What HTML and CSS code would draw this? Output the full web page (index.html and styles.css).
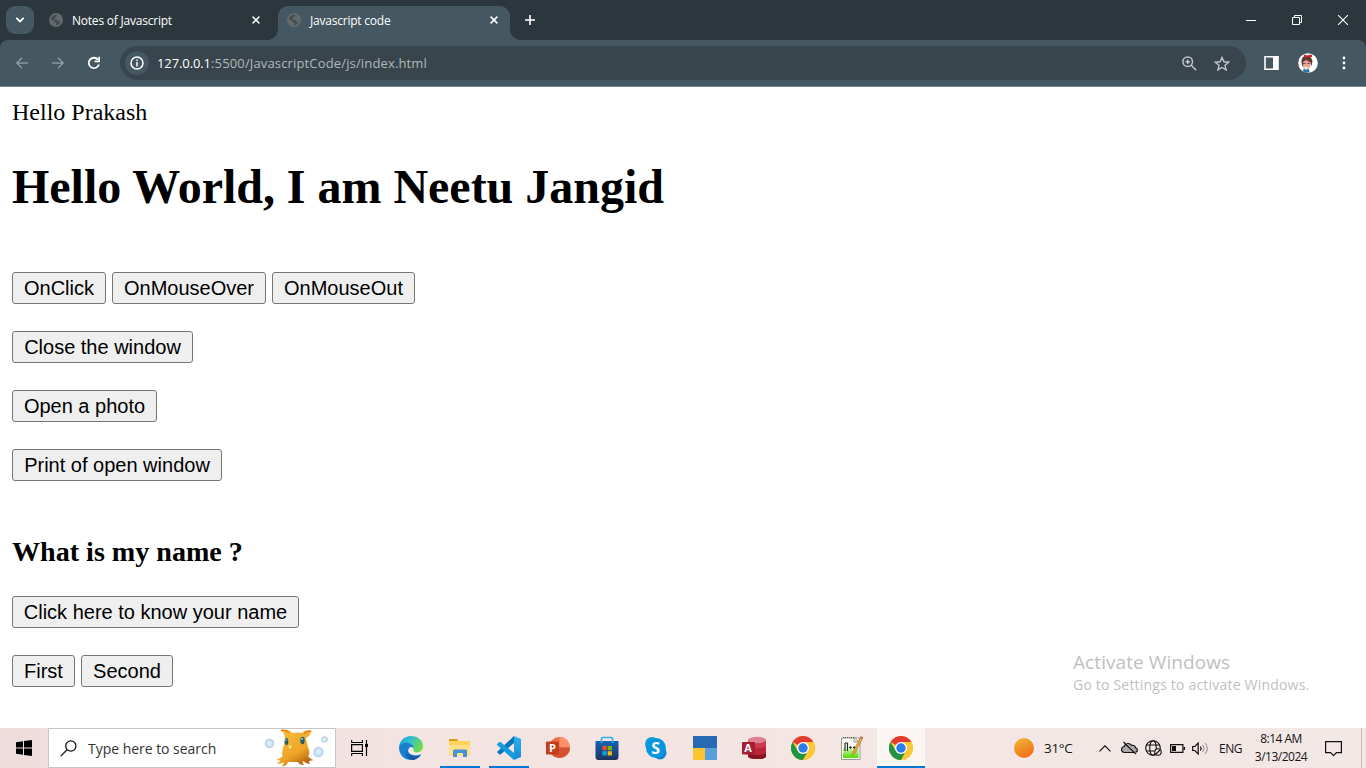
FILE: index.html
```html
<!DOCTYPE html>
<html lang="en">
<head>
<meta charset="utf-8">
<title>Javascript code</title>
<link rel="stylesheet" href="styles.css">
</head>
<body>
<svg class="defs" width="0" height="0">
  <defs>
    <symbol id="globe" viewBox="0 0 14 14"><circle cx="7" cy="7" r="7" fill="#66696b"/><path d="M2 5.200Q3 2.500 6 1.700L8.500 2 7.600 3.800 6 4.300 5.800 5.600 4.800 6.200 7.500 6.400 9 7.700 9.200 8.800 11.800 8.200Q10.800 11.500 7.500 12.200L6.800 11.200 7.600 10 5.800 9.300 5 7.600 2 6.600z" fill="#3f4d54"/></symbol>
    <symbol id="cross" viewBox="0 0 8 8"><path d="M.6.6l6.800 6.800M7.400.6L.6 7.400" stroke="#fff" stroke-width="1.500"/></symbol>
    <symbol id="chrome" viewBox="0 0 24 24"><circle cx="12" cy="12" r="12" fill="#ffcd40"/><path d="M12 12L1.600 6A12 12 0 0 1 22.400 6H12z" fill="#e33b2e"/><path d="M1.600 6A12 12 0 0 0 12 24l5.200-9L12 12 6.800 15z" fill="#229342"/><path d="M22.400 6A12 12 0 0 1 12 24l5.200-9A6 6 0 0 0 12 6z" fill="#fcc934"/><circle cx="12" cy="12" r="6" fill="#fff"/><circle cx="12" cy="12" r="4.700" fill="#2b7de9"/></symbol>
    <linearGradient id="vs" x2="0" y2="1"><stop stop-color="#2fb1f4"/><stop offset="1" stop-color="#168bd6"/></linearGradient>
    <linearGradient id="edgeA" x1="0" y1="0" x2="1" y2=".4"><stop stop-color="#1b9be0"/><stop offset=".5" stop-color="#33c1d4"/><stop offset="1" stop-color="#6bdc4b"/></linearGradient>
    <linearGradient id="edgeB" x2="0" y2="1"><stop stop-color="#1787d2"/><stop offset="1" stop-color="#0f4f9e"/></linearGradient>
    <linearGradient id="store" x2="0" y2="1"><stop stop-color="#1264b3"/><stop offset="1" stop-color="#20345c"/></linearGradient>
    <linearGradient id="sun" x1=".2" y1="0" x2=".7" y2="1"><stop stop-color="#efb439"/><stop offset="1" stop-color="#f26b18"/></linearGradient>
    <linearGradient id="gold" x2=".6" y2="1"><stop stop-color="#f9bd3a"/><stop offset=".7" stop-color="#eda528"/><stop offset="1" stop-color="#b9650f"/></linearGradient>
    <radialGradient id="bubble"><stop stop-color="#e0f7fb"/><stop offset=".6" stop-color="#c5e5ef"/><stop offset="1" stop-color="#c5c2e8"/></radialGradient>
    <linearGradient id="npp" x2="0" y2="1"><stop offset=".3" stop-color="#f8faf5"/><stop offset=".9" stop-color="#61df12"/></linearGradient>
  </defs>
</svg>

<div class="screen">
  <header class="tabstrip">
    <div class="tab-search"><svg width="10" height="6" viewBox="0 0 10 6"><path d="M1.300.8L5 4.500 8.700.8" fill="none" stroke="#fff" stroke-width="1.800"/></svg></div>
    <div class="tab">
      <svg class="favicon"><use href="#globe"/></svg>
      <span class="tab-title">Notes of Javascript</span>
      <svg class="tab-close"><use href="#cross"/></svg>
    </div>
    <div class="tab tab-active">
      <svg class="favicon"><use href="#globe"/></svg>
      <span class="tab-title">Javascript code</span>
      <svg class="tab-close"><use href="#cross"/></svg>
    </div>
    <svg class="new-tab" width="10" height="10" viewBox="0 0 10 10"><path d="M5 0v10M0 5h10" stroke="#fff" stroke-width="1.600"/></svg>
    <div class="window-controls">
      <svg width="10" height="10" viewBox="0 0 10 10"><path d="M0 5.500h10" stroke="#fff"/></svg>
      <svg width="10" height="10" viewBox="0 0 10 10"><path d="M.5 2.500h7v7h-7zM2.500 2.500v-2h7v7h-2" fill="none" stroke="#fff"/></svg>
      <svg width="10" height="10" viewBox="0 0 10 10"><path d="M0 0l10 10M10 0L0 10" stroke="#fff" stroke-width="1.100"/></svg>
    </div>
  </header>

  <nav class="toolbar-back">
    <div class="toolbar">
      <div class="nav-buttons">
        <svg width="12" height="12" viewBox="0 0 12 12"><path d="M12 6H1M6 .8L.9 6 6 11.200" fill="none" stroke="#8b979c" stroke-width="1.500"/></svg>
        <svg width="12" height="12" viewBox="0 0 12 12"><path d="M0 6h11M6 .8L11.100 6 6 11.200" fill="none" stroke="#8b979c" stroke-width="1.500"/></svg>
        <svg width="14" height="14" viewBox="0 0 14 14"><path d="M11.900 8.500A5.200 5.200 0 1 1 11 3.700" fill="none" stroke="#fff" stroke-width="1.800"/><path d="M13 .8v5.400H7.500V4.600h3.800V.8z" fill="#fff"/></svg>
      </div>
      <div class="omnibox">
        <div class="site-info"><svg width="14" height="14" viewBox="0 0 14 14"><circle cx="7" cy="7" r="6" fill="none" stroke="#fff" stroke-width="1.500"/><path d="M7 6v4.500M7 3.500v1.500" stroke="#fff" stroke-width="1.500"/></svg></div>
        <div class="url"><span class="host">127.0.0.1</span><span class="path">:5500/JavascriptCode/js/index.html</span></div>
        <svg class="zoom-icon" width="15" height="15" viewBox="0 0 15 15" fill="none" stroke="#c0c5c7" stroke-width="1.500"><circle cx="5.700" cy="5.700" r="4.800"/><path d="M9.200 9.200l5 5M5.700 3.500v4.400M3.500 5.700h4.400"/></svg>
        <svg class="star" width="16" height="15" viewBox="0 0 16 15"><path d="M8 1.500l1.900 4.300 4.700.4L11 9.300l1.100 4.600L8 11.500l-4.100 2.400L5 9.300 1.400 6.200l4.700-.4z" fill="none" stroke="#c0c5c7" stroke-width="1.400"/></svg>
      </div>
      <svg class="panel-icon" width="15" height="14" viewBox="0 0 15 14"><path d="M1 .8h13v12.400H1z" fill="none" stroke="#fff" stroke-width="1.600"/><path d="M9 1h5v12H9z" fill="#fff"/></svg>
      <svg class="avatar" width="20" height="20" viewBox="0 0 20 20"><circle cx="10" cy="10" r="9.800" fill="#fff"/><path d="M3.500 9.500Q3 4 7 3q6-1 7.500 5l-1 5-2-4-5 1-2 4z" fill="#65392f"/><path d="M6 1.500L9 2.500l5-1V4L10 4 6 4.500z" fill="#cd2331"/><path d="M5 9l3-2 5 3-.5 3.500-3.500 1-3.500-1.500z" fill="#dfa999"/><path d="M5 10.500h2.600M9.300 10.500h2.600" stroke="#8b4260"/><path d="M5 18.500l.5-2.500 3 .5 2.500-.5.5 3-3 .8z" fill="#2675ac"/><path d="M5 13l2 3M12 13l-2.500 3" stroke="#e8b298" stroke-width="1.500"/></svg>
      <svg class="kebab" width="4" height="14" viewBox="0 0 4 14" fill="#fff"><circle cx="2" cy="2" r="1.400"/><circle cx="2" cy="7" r="1.400"/><circle cx="2" cy="12" r="1.400"/></svg>
    </div>
  </nav>

  <main class="page">
    <div class="document">
      <p class="greeting">Hello Prakash</p>
      <h1 class="headline">Hello World, I am Neetu Jangid</h1>
      <div class="button-row"><button class="w-click">OnClick</button><button class="w-over">OnMouseOver</button><button class="w-out">OnMouseOut</button></div>
      <div class="button-row"><button class="w-close">Close the window</button></div>
      <div class="button-row"><button class="w-open">Open a photo</button></div>
      <div class="button-row"><button class="w-print">Print of open window</button></div>
      <h3 class="question">What is my name ?</h3>
      <div class="button-row"><button class="w-name">Click here to know your name</button></div>
      <div class="button-row"><button class="w-first">First</button><button class="w-second">Second</button></div>
    </div>
    <aside class="watermark">
      <span class="watermark-title">Activate Windows</span>
      <span class="watermark-sub">Go to Settings to activate Windows.</span>
    </aside>
  </main>

  <footer class="taskbar">
    <div class="start"><svg width="16" height="16" viewBox="0 0 16 16"><path d="M0 2.200L7 1.200V7.500H0zM8 1.100L16 0v7.500H8zM0 8.500h7v6.300L0 13.800zM8 8.500h8V16l-8-1.100z"/></svg></div>
    <div class="searchbox">
      <svg width="17" height="17" viewBox="0 0 17 17"><circle cx="10.800" cy="6" r="5.100" fill="none" stroke="#111" stroke-width="1.300"/><path d="M7.100 9.700L.7 16.100" stroke="#111" stroke-width="1.300"/></svg>
      <span class="search-text">Type here to search</span>
      <svg class="mascot" width="66" height="38" viewBox="0 0 66 38">
        <circle cx="5.500" cy="14.500" r="4.800" fill="url(#bubble)"/><circle cx="60.500" cy="10.500" r="3.300" fill="url(#bubble)"/><circle cx="54.500" cy="23" r="5.200" fill="url(#bubble)"/>
        <path d="M21 8Q20 3 16 1q9-2 12 3 6-1 10 0 3-4 10-2-3 2-2 4l-4 3q1 7 3 12 1 4-1 6 3 4 6 4l-5 1q0 1 1 3-5-1-7-3-1 2 1 4-5 0-6-3H24q-1 4-6 4.500 2-2 1.500-4-5 2-7 1 3-1 4-3-2 0-4-1 4-1 6-3-1-6 1-10 1-5 1.500-9.500z" fill="url(#gold)"/>
        <path d="M26 27q5 2 10 0" stroke="#e39a24" stroke-width="1" fill="none"/>
        <path d="M17 1.200q6 0 8 3M47 2.500q-5-1-7 2" stroke="#f3791b" stroke-width="1.300" fill="none"/>
        <ellipse cx="22.500" cy="12.500" rx="1.800" ry="3.600" fill="#285e69"/><ellipse cx="38.500" cy="11.500" rx="2.200" ry="3.700" fill="#285e69"/><circle cx="22" cy="11" r=".8" fill="#9de4e2"/><circle cx="38" cy="10" r=".9" fill="#9de4e2"/>
        <path d="M23.500 16.500q3-2 5 0l-1.500 4h-2z" fill="#f7df69" stroke="#c58d18" stroke-width=".5"/>
      </svg>
    </div>
    <div class="task-view"><svg width="17" height="16" viewBox="0 0 17 16" fill="none" stroke="#000" stroke-width="1.200"><path d="M.6 0v2.500h10.800V0M.6 4.600h10.800v6.800H.6zM.6 16v-2.500h10.800V16M15.500 0v16"/><path d="M14 4h3v3h-3z" fill="#000" stroke="none"/></svg></div>
    <div class="apps">
      <div class="app"><svg viewBox="0 0 24 24"><path d="M0 11C.5 5 5 0 12 0c7.500 0 12 5 12 10 0 4.500-3.500 6.500-7 6.500-3 0-4-1.200-3-2.500 1.500-3-1-6.500-6-6.500C4 7.500 1 9 0 11z" fill="url(#edgeA)"/><path d="M0 11.500C.5 8.500 4 6.500 8 6.800c4.500.2 7 3.200 6.500 6C14 10.500 9 11 9 15c0 5 7 7 12.500 4.500Q18 24 12 24C5 24 0 18.500 0 11.500z" fill="#1a7fce"/><path d="M9.500 12Q5 13 6 17.500C7 21 10 23 13.500 23.900 17 23.500 20 21.800 22 18.700q.2-.6-.7-.2C15.500 20.800 9 18.500 9 14.500q0-1.500.5-2.500z" fill="url(#edgeB)"/><path d="M10 12q2.500-2.500 4.500.8-.6 1.700.5 3 2 2 6.500.8-3 2.800-7.500 1.400-5-1.500-4-6z" fill="#f4e8e6"/></svg></div>
      <div class="app running"><svg viewBox="0 0 24 24"><path d="M1 3h8l1 2H1z" fill="#d9a10e"/><path d="M1 5h21v15H1z" fill="#ffd35c"/><path d="M1 9h21v11H1z" fill="#ffdf88"/><path d="M5 21v-6q0-1.500 1.500-1.500h11q1.500 0 1.500 1.500v6h-4v-4H9v4z" fill="#4292d4"/></svg></div>
      <div class="app running"><svg viewBox="0 0 24 24"><path d="M0 16L17 0v7L3.500 18.500 2.500 18.500z" fill="#0877b7"/><path d="M0 8l2.500-2h1L17 17v7L0 9z" fill="#169be0"/><path d="M17 0l7 3v18l-7 3z" fill="url(#vs)"/></svg></div>
      <div class="app"><svg viewBox="0 0 24 24"><circle cx="13.500" cy="11.500" r="10.500" fill="#ed6c47"/><path d="M13.500 1A10.500 10.500 0 0 1 24 11.500H13.500z" fill="#ff8f6b"/><path d="M3 11.500h21a10.500 10.500 0 0 1-21 0z" fill="#d35230"/><rect y="5.500" width="13" height="13" rx="1" fill="#c43e1c"/><text x="3" y="15.800" class="icon-letter">P</text></svg></div>
      <div class="app"><svg viewBox="0 0 24 24"><path d="M.5 5h23v16q0 3-3 3h-17q-3 0-3-3z" fill="url(#store)"/><path d="M6.500 7V2.500q0-1 1-1h9q1 0 1 1V7" fill="none" stroke="#2db4e8" stroke-width="1.700"/><path d="M7.500 10h4.200v4.200H7.500z" fill="#f25022"/><path d="M12.700 10h4.200v4.200h-4.200z" fill="#7fba00"/><path d="M7.500 15.200h4.200v4.200H7.500z" fill="#00a4ef"/><path d="M12.700 15.200h4.200v4.200h-4.200z" fill="#ffb900"/></svg></div>
      <div class="app"><svg viewBox="0 0 24 24"><circle cx="8" cy="8" r="7" fill="#0a9fdf"/><circle cx="16" cy="17" r="6.500" fill="#1482d2"/><circle cx="12" cy="12" r="10" fill="#0796dd"/><text x="7.200" y="17.700" class="skype-letter">S</text></svg></div>
      <div class="app"><svg viewBox="0 0 24 24"><path d="M0 0h24v12H0z" fill="#2869b4"/><path d="M0 12h12v12H0z" fill="#fdc432"/><path d="M12 12h12v12H12z" fill="#58a0dc"/></svg></div>
      <div class="app"><svg viewBox="0 0 24 24"><path d="M6 4v16q0 3 9 3t9-3V4z" fill="#b92537"/><path d="M6 16q0 3 9 3t9-3v4q0 3-9 3t-9-3z" fill="#87131e"/><path d="M6 9q0 3 9 3t9-3V4H6z" fill="#cf394d"/><ellipse cx="15" cy="4" rx="9" ry="3.300" fill="#e08095"/><rect y="6" width="13" height="12.500" rx="1" fill="#a51d31"/><text x="2.200" y="16" class="icon-letter">A</text></svg></div>
      <div class="app"><svg><use href="#chrome"/></svg></div>
      <div class="app"><svg viewBox="0 0 24 24"><path d="M1.500 2H20v21.500H1.500z" fill="#f8faf5" stroke="#81887b" stroke-width=".8"/><path d="M3 5h15.500v17H3z" fill="url(#npp)"/><path d="M3 1.500h11" stroke="#555" stroke-width="1.200" stroke-dasharray="1 1"/><path d="M14 1l5 5h-5z" fill="#ddd" stroke="#777" stroke-width=".6"/><path d="M5 7v8M7.500 7v8M5 7h2.500M9.200 11.500h2.600M13 11.500h2.600M10.500 10.300v2.400M14.300 10.300v2.400" stroke="#242424" stroke-width="1.100" fill="none"/><path d="M20.300 1.500l2.200 1-7 14-3 2.500.8-3.800z" fill="#eda638" stroke="#9b672d" stroke-width=".5"/><path d="M20.800.3l2.200 1-.6 1.400-2.200-1z" fill="#bd5a58"/></svg></div>
      <div class="app running active"><svg><use href="#chrome"/></svg></div>
    </div>
    <div class="tray">
      <svg class="sun" width="20" height="20"><circle cx="10" cy="10" r="10" fill="url(#sun)"/></svg>
      <span class="temperature">31°C</span>
      <svg class="caret" width="12" height="7" viewBox="0 0 12 7"><path d="M.5 6.300L6 .8l5.500 5.500" fill="none" stroke="#111" stroke-width="1.200"/></svg>
      <svg class="cloud" width="17" height="14" viewBox="0 0 17 14"><path d="M4 11.500Q.6 11.500.6 8.500.6 6 3.200 5.500 4 2.500 7 2.500q2.500 0 3.600 1.800 3.500-.3 4 2.500 1.800.5 1.800 2.300 0 2.400-3 2.400z" fill="#aaa6a7" stroke="#111" stroke-width="1.200"/><path d="M3.300.8L15.700 12.500" stroke="#f4e8e5" stroke-width="1"/><path d="M2.500 1L15 13" stroke="#111" stroke-width="1.300"/></svg>
      <svg class="network" width="17" height="16" viewBox="0 0 17 16" fill="none" stroke="#111" stroke-width="1.100"><circle cx="8" cy="8" r="7.300"/><ellipse cx="8" cy="8" rx="3.300" ry="7.300"/><path d="M1.500 5h13M1.500 11h13"/><circle cx="13" cy="12" r="3.200" fill="#f3e8e5"/><path d="M11 14l4-4"/></svg>
      <svg class="battery" width="15" height="9" viewBox="0 0 15 9"><path d="M.6.6h12.300v7.800H.6z" fill="none" stroke="#111" stroke-width="1.200"/><path d="M2 2h4v5H2zM13.500 3H15v3h-1.500z" fill="#111"/></svg>
      <svg class="volume" width="17" height="13" viewBox="0 0 17 13" fill="none" stroke="#111" stroke-width="1.200"><path d="M.7 4.500h2.200L6.200 1v11L2.900 8.500H.7z"/><path d="M8.400 4.500q1.500 2 0 4"/><path d="M10.700 2.800q3 3.700 0 7.400M13.100 1q4.500 5.500 0 11" stroke="#8f8989" stroke-width="1"/></svg>
      <span class="language">ENG</span>
      <div class="clock"><span class="time">8:14 AM</span><span class="date">3/13/2024</span></div>
      <svg class="notice" width="17" height="17" viewBox="0 0 17 17"><path d="M.6 1.600h15.800v11h-5l-2.900 3-2.900-3h-5z" fill="none" stroke="#111" stroke-width="1.200"/></svg>
    </div>
  </footer>
</div>
</body>
</html>
```
FILE: styles.css
```css
* { box-sizing: border-box; }
body { margin: 0; overflow: hidden; background: #fff; }
svg { display: block; flex: none; }
.defs { position: absolute; }
.screen { width: 1366px; height: 768px; display: flex; flex-direction: column; font-family: "Open Sans", "Noto Sans", sans-serif; }

.tabstrip { height: 40px; flex: none; background: #2c373d; display: flex; align-items: center; padding-left: 6px; }
.tab-search { width: 28px; height: 28px; border-radius: 9px; background: #455761; display: grid; place-items: center; }
.tab { width: 232px; height: 34px; align-self: flex-end; display: flex; align-items: center; padding: 0 12px 6px 9px; color: #fff; font-size: 12px; margin-left: 6px; }
.tab-active { background: #455761; border-radius: 10px 10px 0 0; position: relative; }
.tab-active::before, .tab-active::after { content: ""; position: absolute; bottom: 0; width: 10px; height: 10px; }
.tab-active::before { left: -10px; background: radial-gradient(circle at 0 0, transparent 9.500px, #455761 10px); }
.tab-active::after { right: -10px; background: radial-gradient(circle at 100% 0, transparent 9.500px, #455761 10px); }
.favicon { width: 14px; height: 14px; }
.tab-title { flex: 1; margin-left: 9px; padding-top: 1px; line-height: 18px; white-space: nowrap; letter-spacing: -0.220px; }
.tab-close { width: 8px; height: 8px; }
.new-tab { margin-left: 15px; }
.window-controls { margin-left: auto; display: flex; gap: 36px; padding-right: 18px; }

.toolbar-back { height: 47px; flex: none; background: #2c373d; }
.toolbar { height: 47px; background: #455761; border-bottom: 1px solid #77868d; border-radius: 8px 8px 0 0; display: flex; align-items: center; padding: 0 20px 0 16px; }
.nav-buttons { width: 104px; display: flex; gap: 24px; align-items: center; }
.nav-buttons svg:last-child { margin-left: -1px; }
.omnibox { width: 1126px; height: 34px; border-radius: 17px; background: #38454c; display: flex; align-items: center; padding: 0 16px 0 5px; gap: 17px; }
.site-info { width: 24px; height: 24px; border-radius: 50%; background: #455761; display: grid; place-items: center; }
.url { flex: 1; display: flex; margin-left: -9px; font-size: 13px; line-height: 20px; white-space: nowrap; }
.host { color: #fff; width: 54px; letter-spacing: -0.100px; }
.path { color: #b1b8bb; letter-spacing: 0.150px; }
.panel-icon { margin-left: 18px; }
.avatar { margin-left: 19px; }
.kebab { margin-left: auto; }

.page { flex: 1; min-height: 0; display: flex; justify-content: space-between; padding: 12px 57px 0 12px; background: #fff; }
.document { font-family: "Liberation Serif", serif; color: #000; }
.greeting { margin: 0; font-size: 24px; line-height: 27px; }
.headline { margin: 33px 0 58px; font-size: 48px; line-height: 55px; letter-spacing: -0.020px; }
.button-row { display: flex; gap: 6px; margin-bottom: 27px; }
button { height: 32px; border: 1px solid #767676; border-radius: 3px; background: #efefef; color: #000; padding: 0; font: 20px/23px "Liberation Sans", sans-serif; white-space: nowrap; }
.w-click { width: 94px; } .w-over { width: 154px; } .w-out { width: 143px; }
.w-close { width: 181px; } .w-open { width: 145px; } .w-print { width: 210px; }
.w-name { width: 287px; } .w-first { width: 63px; } .w-second { width: 92px; }
.question { margin: 55px 0 28px; font-size: 28.080px; line-height: 32px; }
.watermark { display: flex; flex-direction: column; align-self: flex-end; width: 236px; height: 78px; color: #c0c0c0; white-space: nowrap; }
.watermark-title { font-size: 19px; line-height: 24px; letter-spacing: 0.080px; }
.watermark-sub { font-size: 14px; line-height: 21px; letter-spacing: 0.200px; }

.taskbar { height: 40px; flex: none; display: flex; background: linear-gradient(90deg, #f0dcdc 0, #f3e3e1 28%, #f4e6e3 60%, #f2e8e6 100%); color: #151515; }
.start { width: 48px; display: grid; place-items: center; }
.searchbox { width: 288px; border: 1px solid #c5c5c5; background: #fff; display: flex; align-items: center; padding-left: 11px; }
.search-text { margin-left: 11px; font-size: 14px; width: 128px; letter-spacing: -0.030px; white-space: nowrap; color: #333; }
.mascot { margin-left: 48px; }
.task-view { width: 50px; display: grid; place-items: center start; padding-left: 15px; }
.apps { display: flex; }
.app { width: 49px; display: grid; place-items: center; position: relative; }
.app svg { width: 24px; height: 24px; }
.running::after { content: ""; position: absolute; left: 5px; right: 4px; bottom: 0; height: 2px; background: #0078d7; }
.app:last-child { width: 48px; margin-left: 1px; }
.app:last-child svg { margin-left: -1px; }
.active { background: #fbf5f3; }
.active::after { left: 0; right: 0; }
.icon-letter { font: bold 11px "Open Sans", sans-serif; fill: #fff; }
.skype-letter { font: bold 16px "Open Sans", sans-serif; fill: #fff; }
.tray { flex: 1; display: flex; align-items: center; padding-left: 89px; font-size: 12px; white-space: nowrap; }
.temperature { margin-left: 10px; width: 30px; font-size: 13.500px; letter-spacing: -0.300px; }
.caret { margin-left: 25px; }
.cloud { margin-left: 10px; }
.network { margin-left: 7px; }
.battery { margin-left: 8px; }
.volume { margin-left: 7px; }
.language { margin-left: 10px; width: 24px; letter-spacing: -0.450px; }
.clock { width: 54px; margin-left: 11px; display: flex; flex-direction: column; align-items: center; line-height: 18px; }
.time, .date { letter-spacing: -0.500px; }
.notice { margin-left: 17px; }
.tray::after { content: ""; width: 1px; height: 40px; margin-left: auto; margin-right: 4px; background: #c6bfbe; }
```
